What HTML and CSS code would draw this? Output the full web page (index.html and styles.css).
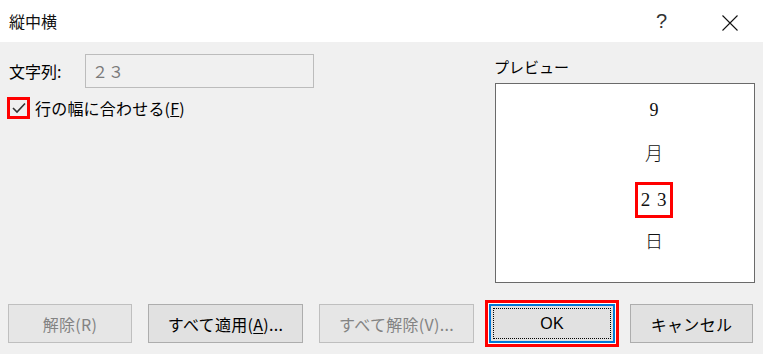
FILE: index.html
```html
<!DOCTYPE html>
<html lang="ja">
<head>
<meta charset="utf-8">
<link rel="stylesheet" href="styles.css">
</head>
<body>
<div class="dialog">
  <div class="titlebar">
    <span class="title">縦中横</span>
    <span class="help">?</span>
    <span class="close">
      <svg width="16" height="16" viewBox="0 0 16 16"><path d="M0.5 0.5 L15.5 15.5 M15.5 0.5 L0.5 15.5" stroke="#111" stroke-width="1.1" fill="none"/></svg>
    </span>
  </div>
  <div class="content">
    <div class="left">
      <div class="row">
        <span class="label">文字列:</span>
        <div class="input">２３</div>
      </div>
      <div class="check-row">
        <span class="checkbox">
          <svg width="14" height="12" viewBox="0 0 14 12"><path d="M1 6 L5 10 L13 1.5" stroke="#333" stroke-width="1.6" fill="none"/></svg>
        </span>
        <span class="check-label">行の幅に合わせる(<u>F</u>)</span>
      </div>
    </div>
    <div class="right">
      <div class="plabel">プレビュー</div>
      <div class="preview">
        <div class="pcol">
          <div class="pitem">9</div>
          <div class="pitem">月</div>
          <div class="pitem"><span class="tcy">2 3</span></div>
          <div class="pitem">日</div>
        </div>
      </div>
    </div>
  </div>
  <div class="buttons">
    <button class="btn w124 disabled">解除(R)</button>
    <button class="btn w155">すべて適用(<u>A</u>)...</button>
    <button class="btn w155 disabled">すべて解除(V)...</button>
    <button class="btn ok"><span class="focus">OK</span></button>
    <button class="btn w123">キャンセル</button>
  </div>
</div>
</body>
</html>
```
FILE: styles.css
```css
html, body {
  margin: 0;
  padding: 0;
}
body {
  width: 763px;
  height: 354px;
  background: #f0f0f0;
  font-family: "Noto Sans CJK JP", "Noto Sans", sans-serif;
  color: #000;
  overflow: hidden;
}
.titlebar {
  height: 42px;
  background: #fff;
  display: flex;
  align-items: center;
  position: relative;
}
.title {
  margin-left: 9px;
  font-size: 16px;
  color: #111;
}
.help {
  position: absolute;
  left: 656px;
  top: 11px;
  font-size: 20px;
  line-height: 20px;
  font-family: "Liberation Sans", sans-serif;
  color: #333;
}
.close {
  position: absolute;
  left: 722px;
  top: 12px;
  width: 16px;
  height: 16px;
}
.content {
  display: flex;
  height: 244px;
}
.left {
  width: 495px;
  padding-top: 12px;
}
.row {
  display: flex;
  align-items: center;
  height: 34px;
}
.label {
  margin-left: 9px;
  width: 76px;
  font-size: 16px;
}
.input {
  border: 1px solid #bcbcbc;
  background: #f0f0f0;
  color: #7a7a7a;
  font-size: 16px;
  line-height: 32px;
  padding-left: 6px;
  box-sizing: border-box;
  width: 229px;
  height: 34px;
}
.check-row {
  display: flex;
  align-items: center;
  margin-top: 9px;
  height: 22px;
}
.checkbox {
  margin-left: 7px;
  width: 23px;
  height: 22px;
  box-sizing: border-box;
  border: 3px solid #f00;
  display: flex;
  align-items: center;
  justify-content: center;
}
.check-label {
  margin-left: 5px;
  font-size: 16px;
  line-height: 22px;
  letter-spacing: 0.2px;
}
.right {
  width: 260px;
  padding-top: 14px;
}
.plabel {
  font-size: 15px;
  line-height: 22px;
  height: 22px;
  margin-left: -1px;
}
.preview {
  margin-top: 5px;
  width: 260px;
  height: 200px;
  box-sizing: border-box;
  border: 1px solid #6a6a6a;
  background: #fff;
}
.pcol {
  width: 60px;
  margin-left: 128px;
  padding-top: 4px;
  display: flex;
  flex-direction: column;
  align-items: center;
}
.pitem {
  height: 44px;
  line-height: 44px;
  font-family: "Liberation Serif", "Noto Sans CJK JP", serif;
  font-size: 18px;
  font-weight: 300;
  color: #111;
}
.tcy {
  display: inline-block;
  width: 38px;
  height: 36px;
  line-height: 30px;
  box-sizing: border-box;
  border: 3px solid #f00;
  text-align: center;
  vertical-align: middle;
  font-size: 19px;
  white-space: pre;
  letter-spacing: 1px;
}
.buttons {
  display: flex;
  padding-left: 8px;
  padding-top: 18px;
  gap: 16px;
}
.btn {
  height: 39px;
  box-sizing: border-box;
  border: 1px solid #adadad;
  background: #e1e1e1;
  font-family: "Noto Sans CJK JP", "Noto Sans", sans-serif;
  font-size: 16px;
  letter-spacing: 0.3px;
  color: #000;
  padding: 0;
  margin: 0;
}
.btn u {
  text-underline-offset: 2px;
}
.w124 { width: 124px; }
.w155 { width: 155px; }
.w123 { width: 123px; margin-left: -1px; }
.disabled {
  color: #838383;
  border-color: #bfbfbf;
  background: #e6e6e6;
}
.ok {
  width: 126px;
  border: 2px solid #0078d7;
  box-shadow: 0 0 0 1px #fff, 0 0 0 4px #f00;
  padding: 2px;
  margin-left: -1px;
}
.focus {
  display: flex;
  align-items: center;
  justify-content: center;
  width: 100%;
  height: 100%;
  box-sizing: border-box;
  border: 1px dotted #000;
  font-family: "Liberation Sans", sans-serif;
  font-size: 16px;
}
```
